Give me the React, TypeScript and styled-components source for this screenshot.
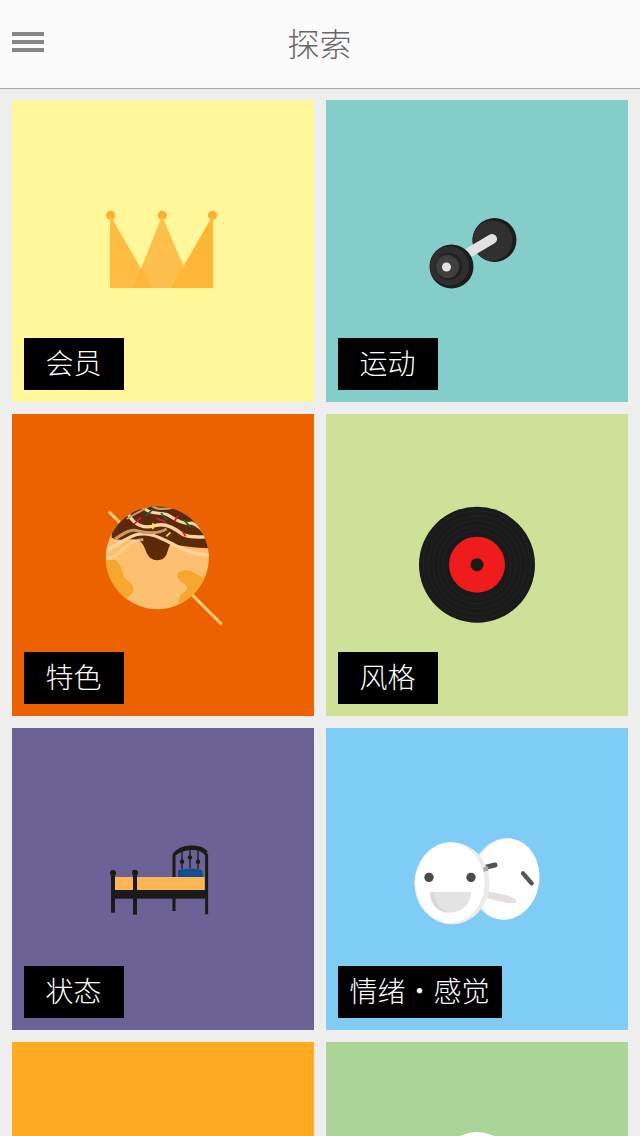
import React from "react";
import styled, { createGlobalStyle } from "styled-components";

const GlobalStyle = createGlobalStyle`
    html, body {
        margin: 0;
        padding: 0;
        height: 100%;
        overflow: hidden;
        background: #eeeeee;
        font-family: "Noto Sans CJK SC", "Liberation Sans", sans-serif;
    }
`;

const Page = styled.div`
    width: 640px;
    height: 1136px;
    overflow: hidden;
    background: #eeeeee;
`;

const Header = styled.header`
    box-sizing: border-box;
    height: 89px;
    position: relative;
    display: flex;
    align-items: flex-start;
    justify-content: center;
    padding-right: 1px;
    background: #fbfbfb;
    border-bottom: 1px solid #aaaaaa;
`;

const MenuButton = styled.button`
    position: absolute;
    left: 12px;
    top: 32px;
    width: 32px;
    padding: 0;
    border: 0;
    background: none;
    display: flex;
    flex-direction: column;
    gap: 4px;
`;

const MenuBar = styled.span`
    display: block;
    height: 4px;
    background: #888888;
`;

const Title = styled.h1`
    margin: 0;
    font-size: 32px;
    font-weight: 300;
    line-height: 84px;
    color: #666666;
`;

const Grid = styled.main`
    display: grid;
    grid-template-columns: 302px 302px;
    grid-auto-rows: 302px;
    gap: 12px;
    padding: 11px 12px 12px;
`;

const TileBox = styled.section<{ $bg: string }>`
    position: relative;
    background: ${({ $bg }) => $bg};
    overflow: hidden;
`;

const Art = styled.svg`
    display: block;
    width: 302px;
    height: 302px;
`;

const Label = styled.span`
    position: absolute;
    left: 12px;
    bottom: 12px;
    box-sizing: border-box;
    min-width: 100px;
    height: 52px;
    padding: 0 12.5px 0 11.5px;
    background: #000000;
    color: #ffffff;
    font-size: 28px;
    font-weight: 300;
    line-height: 48px;
    text-align: center;
    white-space: nowrap;
`;

const Crown = () => (
    <>
        <circle cx="110.7" cy="215.3" r="4.6" fill="#ffad33" />
        <circle cx="162.3" cy="215.3" r="4.6" fill="#ffad33" />
        <circle cx="212.5" cy="215.3" r="4.6" fill="#ffad33" />
        <path d="M110 216 L110.6 216 L152.3 288 L110 288 Z" fill="#ffbb44" />
        <path d="M162 216 L193 288 L133.3 288 Z" fill="#ffbf4d" />
        <path d="M141.2 267.5 L152.3 288 L133.3 288 Z" fill="#ffb53c" />
        <path d="M213 216 L213 288 L171 288 L212.4 216 Z" fill="#ffb536" />
    </>
);

const Dumbbell = () => (
    <>
        <circle cx="494.5" cy="240" r="22" fill="#1c1c1c" />
        <circle cx="492.5" cy="240.5" r="20" fill="#303030" />
        <path d="M470 252 L492 239" stroke="#e2e2e2" strokeWidth="10" strokeLinecap="round" />
        <circle cx="451.5" cy="266.5" r="22" fill="#1c1c1c" />
        <circle cx="449.5" cy="266" r="19.5" fill="#2e2e2e" />
        <circle cx="449" cy="266.5" r="13.5" fill="#222222" />
        <circle cx="447.5" cy="266.5" r="11.5" fill="#404040" />
        <circle cx="446.5" cy="267" r="4.5" fill="#e2e2e2" />
    </>
);

const Takoyaki = () => (
    <g transform="translate(95 495) scale(0.3333)">
        <defs>
            <clipPath id="ball">
                <circle cx="187" cy="188" r="154.5" />
            </clipPath>
        </defs>
        <path d="M44 52 L378 386" stroke="#fcc878" strokeWidth="9" strokeLinecap="round" />
        <circle cx="187" cy="188" r="154.5" fill="#fdc070" />
        <g clipPath="url(#ball)">
            <path d="M20 195 L60 195 C78 205 84 230 84 240 C90 255 118 265 116 285 C112 300 100 305 92 306 L20 340 Z" fill="#f5a72e" />
            <path d="M248 240 C252 222 280 222 300 235 C315 245 330 250 345 252 L345 345 L250 340 C250 325 250 318 254 305 C262 290 282 290 274 272 C262 262 246 258 248 240 Z" fill="#f5a72e" />
            <path d="M50 128 L50 20 L345 20 L345 160 C300 160 260 152 226 148 C220 160 218 170 214 180 C206 198 180 200 165 188 C150 175 152 150 132 136 C110 126 80 142 50 128 Z" fill="#5c2a08" />
            <g fill="none" stroke="#fcd6a0">
                <path d="M20 180 C60 150 90 132 120 120 C160 108 195 128 235 148 C270 168 310 182 350 180" strokeWidth="10" />
                <path d="M20 194 C62 190 75 170 100 150 C115 138 130 134 145 134" strokeWidth="8" opacity="0.7" />
                <path d="M100 58 C118 92 150 102 180 92 C210 82 240 100 262 118 C285 130 310 125 345 126" strokeWidth="10" />
                <path d="M140 30 C160 62 190 50 215 58 C240 72 265 90 290 84 C305 90 320 100 330 115" strokeWidth="9" />
                <path d="M60 132 C90 112 110 100 130 108 C155 116 190 116 215 102" stroke="#c99a66" strokeWidth="9" />
                <path d="M170 30 C180 44 200 44 235 38" stroke="#c99a66" strokeWidth="7" />
                <path d="M95 72 C125 52 150 44 165 30" stroke="#c99a66" strokeWidth="6" />
            </g>
        </g>
        <g fill="none" strokeWidth="5">
            <path d="M118 87 L138 67" stroke="#e0144c" />
            <path d="M150 64 L173 44" stroke="#0a6e35" />
            <path d="M198 54 L217 76" stroke="#0a6e35" />
            <path d="M184 70 L212 81" stroke="#e0144c" />
            <path d="M239 78 L248 63" stroke="#e8141c" />
            <path d="M268 76 L287 97" stroke="#0a6e35" />
            <path d="M174 84 L174 103" stroke="#ffe600" />
            <path d="M214 124 L226 112" stroke="#ffe600" />
            <path d="M262 108 L272 124" stroke="#e8141c" />
        </g>
    </g>
);

const Vinyl = () => (
    <>
        <circle cx="477" cy="564.7" r="58" fill="#1a1a1a" />
        {[34, 39, 44, 49, 54].map((r) => (
            <circle key={r} cx="477" cy="564.7" r={r} fill="none" stroke="#262626" strokeWidth="0.7" />
        ))}
        <circle cx="477" cy="564.7" r="28" fill="#f01c1c" />
        <circle cx="477" cy="564.7" r="6.5" fill="#1a1a1a" />
    </>
);

const Bed = () => (
    <g transform="translate(100 835) scale(0.3333)">
        <path d="M234 126 L234 106 C250 100 295 100 306 106 L309 126 Z" fill="#0f4f8f" />
        <path d="M222 228 L222 60 C240 40 300 28 320 60 L320 238" fill="none" stroke="#1a1a1a" strokeWidth="9" />
        <path d="M222 58 C240 32 300 26 320 52" fill="none" stroke="#1a1a1a" strokeWidth="8" />
        <g stroke="#1a1a1a" strokeWidth="4">
            <path d="M246 46 L246 102" />
            <path d="M270 40 L270 100" />
            <path d="M294 46 L294 102" />
        </g>
        <g fill="#1a1a1a">
            <circle cx="246" cy="80" r="6.5" />
            <circle cx="270" cy="67" r="6.5" />
            <circle cx="294" cy="80" r="6.5" />
        </g>
        <rect x="45" y="126" width="269" height="39" fill="#fdb653" />
        <rect x="33" y="165" width="290" height="26" fill="#1a1a1a" />
        <rect x="33" y="118" width="12" height="115" fill="#1a1a1a" />
        <rect x="99" y="118" width="12" height="121" fill="#1a1a1a" />
        <circle cx="39" cy="114" r="9" fill="#1a1a1a" />
        <circle cx="105" cy="113" r="9" fill="#1a1a1a" />
    </g>
);

const Masks = () => (
    <g transform="translate(405 830) scale(0.3333)">
        <ellipse cx="300" cy="147" rx="102" ry="123" fill="#e8e6e6" transform="rotate(8 300 147)" />
        <ellipse cx="303" cy="147" rx="100" ry="122" fill="#ffffff" transform="rotate(8 303 147)" />
        <path d="M240 112 L270 105" stroke="#555555" strokeWidth="15" strokeLinecap="round" />
        <path d="M354 130 L380 160" stroke="#555555" strokeWidth="13" strokeLinecap="round" />
        <path d="M240 186 C280 186 330 200 336 214 C330 226 280 216 240 200 Z" fill="#e4dfdf" />
        <ellipse cx="141" cy="160" rx="113" ry="123" fill="#ebebeb" />
        <ellipse cx="135" cy="158" rx="104" ry="121" fill="#ffffff" />
        <path d="M235 112 L250 109 L250 122 L236 125 Z" fill="#a8a8a8" />
        <circle cx="72" cy="142" r="14" fill="#4a4a4a" />
        <circle cx="198" cy="142" r="14" fill="#4a4a4a" />
        <path d="M75 186 L198 186 C198 225 165 248 135 248 C100 248 75 222 75 186 Z" fill="#e3e3e3" />
        <path d="M75 186 L88 186 C88 215 105 238 130 248 C100 248 75 222 75 186 Z" fill="#d8d8d8" />
    </g>
);

const WhiteDome = () => <circle cx="477" cy="1170" r="38" fill="#ffffff" />;

type TileProps = {
    bg: string;
    label?: string;
    // top left of the tile on the page, the drawings use page coordinates
    x: number;
    y: number;
    children?: React.ReactNode;
};

const Tile = ({ bg, label, x, y, children }: TileProps) => (
    <TileBox $bg={bg}>
        <Art viewBox={`${x} ${y} 302 302`}>{children}</Art>
        {label && <Label>{label}</Label>}
    </TileBox>
);

export default function App() {
    return (
        <Page>
            <GlobalStyle />
            <Header>
                <MenuButton aria-label="menu">
                    <MenuBar />
                    <MenuBar />
                    <MenuBar />
                </MenuButton>
                <Title>探索</Title>
            </Header>
            <Grid>
                <Tile bg="#fff799" label="会员" x={12} y={100}><Crown /></Tile>
                <Tile bg="#84cdc9" label="运动" x={326} y={100}><Dumbbell /></Tile>
                <Tile bg="#ec6100" label="特色" x={12} y={414}><Takoyaki /></Tile>
                <Tile bg="#cfe197" label="风格" x={326} y={414}><Vinyl /></Tile>
                <Tile bg="#6c6296" label="状态" x={12} y={728}><Bed /></Tile>
                <Tile bg="#7fcdf7" label="情绪·感觉" x={326} y={728}><Masks /></Tile>
                <Tile bg="#ffaa22" x={12} y={1042} />
                <Tile bg="#acd498" x={326} y={1042}><WhiteDome /></Tile>
            </Grid>
        </Page>
    );
}
